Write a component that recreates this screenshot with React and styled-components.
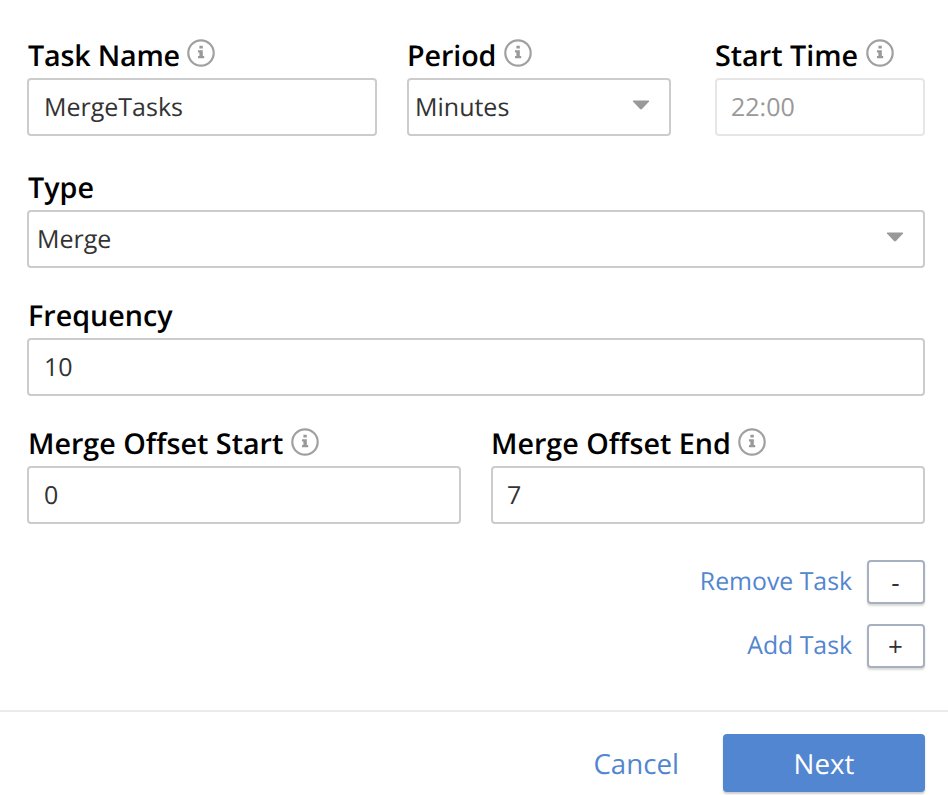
import React from "react";
import styled, { createGlobalStyle } from "styled-components";

const Global = createGlobalStyle`
  * { box-sizing: border-box; }
  body { margin: 0; background: #fff; font-family: "Open Sans", sans-serif; overflow: hidden; text-rendering: geometricPrecision; }
  button { font-family: inherit; text-rendering: inherit; }
`;

const Page = styled.main`
  width: 948px;
  height: 795px;
  display: flex;
  flex-direction: column;
  background: #fff;
`;

const Form = styled.form`
  height: 710px;
  padding: 34px 23px 0 27px;
`;

const Row = styled.div`
  display: grid;
  grid-template-columns: ${(p) => p.$columns || "1fr"};
  justify-content: space-between;
  column-gap: ${(p) => p.$gap || "0"};
  margin-bottom: ${(p) => p.$after || "26px"};
`;

const PeriodCell = styled.div`
  width: 264px;
`;

const Field = styled.div`
  min-width: 0;
`;

const Label = styled.label`
  display: flex;
  align-items: center;
  height: 44px;
  padding-left: ${(p) => p.$indent || "0"};
  font-size: 28.7px;
  font-weight: 600;
  line-height: 38px;
  letter-spacing: ${(p) => p.$tracking || "normal"};
  color: #000;
  white-space: nowrap;
`;

const InfoSvg = styled.svg`
  width: 28px;
  height: 28px;
  margin: ${(p) => (p.$low ? "-5px" : "-7px")} 0 0 7.5px;
  flex: none;
`;

const Control = styled.div`
  display: flex;
  align-items: center;
  justify-content: space-between;
  height: 58px;
  padding: 0 19px 0 ${(p) => p.$inset || "15px"};
  border: 2px solid ${(p) => (p.$disabled ? "#e6e6e6" : "#ccc")};
  border-radius: 4px;
  font-size: 25px;
  line-height: 34px;
  color: ${(p) => (p.$disabled ? "#999" : "#333")};
`;

const Arrow = styled.svg`
  width: 18px;
  height: 10px;
  margin-top: -4px;
`;

const TaskAction = styled.div`
  display: flex;
  align-items: center;
  justify-content: flex-end;
  gap: 15px;
  height: 44px;
  margin-bottom: 20px;
  font-size: 24.8px;
  color: #5386d0;
`;

const ActionText = styled.span`
  padding-bottom: 3px;
`;

const SquareButton = styled.button`
  width: 58px;
  height: 44px;
  padding: 0 1px 0 0;
  border: 2px solid #a7b0be;
  border-radius: 4px;
  background: #fff;
  box-shadow: 0 2px 2px rgba(0, 0, 0, 0.15);
  font-size: 26px;
  color: #333;
`;

const Footer = styled.footer`
  display: flex;
  justify-content: flex-end;
  align-items: flex-start;
  height: 85px;
  padding: 22px 23px 0 0;
  border-top: 2px solid #ebebeb;
`;

const FooterButton = styled.button`
  width: ${(p) => (p.$primary ? "202px" : "auto")};
  height: 58px;
  padding: 2px 0 0;
  margin-left: 44px;
  border: 0;
  border-radius: 4px;
  background: ${(p) => (p.$primary ? "#5386d0" : "transparent")};
  box-shadow: ${(p) => (p.$primary ? "0 2px 2px rgba(0, 0, 0, 0.2)" : "none")};
  color: ${(p) => (p.$primary ? "#fff" : "#5386d0")};
  font-size: 27.7px;
`;

function Info({ low }) {
  return (
    <InfoSvg viewBox="0 0 28 28" fill="none" $low={low}>
      <circle cx="14" cy="14" r="12.7" stroke="#a0a0a0" strokeWidth="2.2" />
      <path d="M12.4 6.7h3.4v2.9h-3.4zM11 11.3h4.8v5.8h1.4v2.2H11v-2.2h1.4v-3.6H11z" fill="#999" />
    </InfoSvg>
  );
}

function FieldBox({ label, value, info, lowInfo, select, disabled, inset, indent, tracking }) {
  return (
    <Field>
      <Label $indent={indent} $tracking={tracking}>{label}{info && <Info low={lowInfo} />}</Label>
      <Control $disabled={disabled} $inset={inset}>
        <span>{value}</span>
        {select && <Arrow viewBox="0 0 18 10"><path d="M1.5 .5h15q1 0 .5 1L10 9q-1 .8-2 0L1 1.5q-.5-1 .5-1z" fill="#999" /></Arrow>}
      </Control>
    </Field>
  );
}

export default function App() {
  return (
    <Page>
      <Global />
      <Form>
        <Row $columns="350px 278px 210px" $gap="30px" $after="30px">
          <FieldBox label="Task Name" value="MergeTasks" info indent="1px" tracking="-0.2px" />
          <PeriodCell><FieldBox label="Period" value="Minutes" info select inset="6px" tracking="-0.1px" /></PeriodCell>
          <FieldBox label="Start Time" value="22:00" info disabled inset="14px" />
        </Row>
        <Row><FieldBox label="Type" value="Merge" select inset="8px" indent="1px" /></Row>
        <Row><FieldBox label="Frequency" value="10" indent="1px" /></Row>
        <Row $columns="1fr 1fr" $gap="30px" $after="36px">
          <FieldBox label="Merge Offset Start" value="0" info lowInfo indent="1px" />
          <FieldBox label="Merge Offset End" value="7" info lowInfo inset="14px" />
        </Row>
        <TaskAction><ActionText>Remove Task</ActionText><SquareButton type="button">-</SquareButton></TaskAction>
        <TaskAction><ActionText>Add Task</ActionText><SquareButton type="button">+</SquareButton></TaskAction>
      </Form>
      <Footer>
        <FooterButton>Cancel</FooterButton>
        <FooterButton $primary>Next</FooterButton>
      </Footer>
    </Page>
  );
}
